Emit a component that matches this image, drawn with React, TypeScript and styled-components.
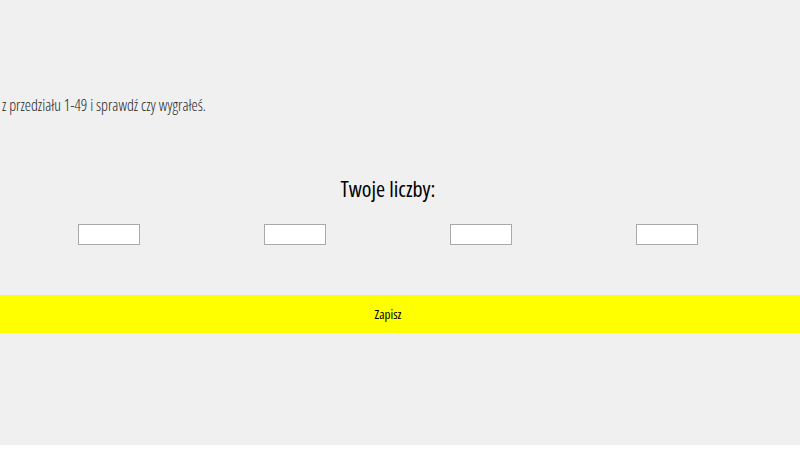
import React, { useState } from "react";
import styled, { createGlobalStyle } from "styled-components";

const GlobalStyle = createGlobalStyle`
  html, body {
    margin: 0;
    padding: 0;
    background: #ffffff;
  }
  body {
    font-family: "Open Sans", "Noto Sans", sans-serif;
    font-stretch: 75%;
  }
`;

const App: React.FC = () => {
  const [numbers, setNumbers] = useState<string[]>(["", "", "", ""]);

  const changeNumber = (idx: number, value: string) => {
    const next = [...numbers];
    next[idx] = value;
    setNumbers(next);
  };

  return (
    <>
      <GlobalStyle />
      <Page>
        <Intro>z przedziału 1-49 i sprawdź czy wygrałeś.</Intro>
        <Numbers>
          <h2>Twoje liczby:</h2>
          <div className="row">
            {numbers.map((n, i) => (
              <div className="cell" key={i}>
                <NumberInput
                  value={n}
                  onChange={(e: React.ChangeEvent<HTMLInputElement>) =>
                    changeNumber(i, e.target.value)
                  }
                />
              </div>
            ))}
          </div>
        </Numbers>
        <SaveButton>Zapisz</SaveButton>
      </Page>
    </>
  );
};

const Page = styled.div`
  display: flex;
  flex-direction: column;

  height: 445px;
  padding-top: 94px;
  box-sizing: border-box;
  background: #f0f0f0;
`;

const Intro = styled.p`
  margin: 0;
  padding-left: 2px;
  font-size: 15.7px;
  line-height: 22px;
  font-weight: 300;
  color: #222222;
`;

const Numbers = styled.div`
  display: flex;
  flex-direction: column;
  align-items: center;

  width: 744px;
  margin: 0 0 0 16px;
  padding-top: 56px;
  & > h2 {
    margin: 0;
    font-size: 22px;
    line-height: 32px;
    font-weight: 400;
    color: #000000;
  }
  & > .row {
    display: grid;
    grid-template-columns: repeat(4, 1fr);
    width: 100%;
    margin-top: 20px;
    & > .cell {
      display: flex;
      justify-content: center;
    }
  }
`;

const NumberInput = styled.input`
  width: 62px;
  height: 21px;
  box-sizing: border-box;
  padding: 0 4px;

  border: 1px solid #a9a9a9;
  background: #ffffff;
  font-size: 13px;
  outline: none;
`;

const SaveButton = styled.button`
  width: 100%;
  height: 38px;
  margin-top: 50px;
  padding: 0 24px 0 0;

  border: none;
  background: #ffff00;
  font-family: "Open Sans", "Noto Sans", sans-serif;
  font-stretch: 75%;
  font-size: 13px;
  color: #000000;
  cursor: pointer;
`;

export default App;
